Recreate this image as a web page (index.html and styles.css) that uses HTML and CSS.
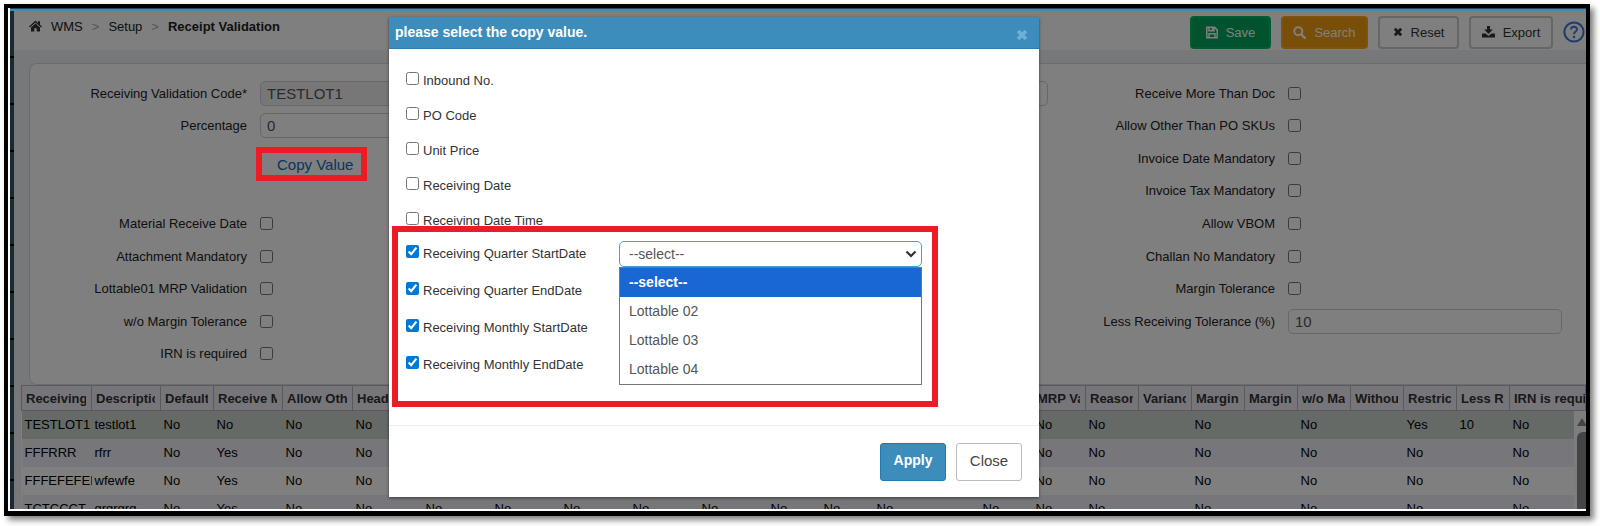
FILE: index.html
```html
<!DOCTYPE html>
<html lang="en">
<head>
    <meta charset="UTF-8">
    <meta name="viewport" content="width=device-width, initial-scale=1.0">
    <title>Receipt Validation</title>
    <link rel="stylesheet" href="styles.css">
</head>
<body>
    <div class="frame">
        <div class="topline"></div>
        <div class="app">
            <div class="sidebar"></div>
            <main class="main">
                <header class="header">
                    <nav class="breadcrumb">
                        <svg width="13" height="12" viewBox="0 0 13 12"><path d="M6.5 0.6 L9 2.9 V1.2 H11 V4.8 L13 6.6 L12.2 7.5 L6.5 2.4 L0.8 7.5 L0 6.6 Z M6.5 3.6 L11 7.6 V11.4 H7.7 V8.2 H5.3 V11.4 H2 V7.6 Z" fill="#333"/></svg>
                        <a href="#">WMS</a>
                        <span class="sep">&gt;</span>
                        <a href="#">Setup</a>
                        <span class="sep">&gt;</span>
                        <strong>Receipt Validation</strong>
                    </nav>
                    <div class="actions">
                        <button class="btn btn-save">
                            <svg width="12" height="13" viewBox="0 0 12 13"><path d="M0.8 1.3 H8.6 L11.2 3.9 V11.7 H0.8 Z M3 1.3 V4.8 H8 V1.3 M3 11.7 V7.8 H9 V11.7" fill="none" stroke="#fff" stroke-width="1.5"/><rect x="5.8" y="1.6" width="1.6" height="2.6" fill="#fff"/></svg>
                            Save
                        </button>
                        <button class="btn btn-search">
                            <svg width="13" height="13" viewBox="0 0 13 13"><circle cx="5.3" cy="5.3" r="4" fill="none" stroke="#fff" stroke-width="2"/><path d="M8.3 8.3 L11.8 11.8" stroke="#fff" stroke-width="2.4" stroke-linecap="round"/></svg>
                            Search
                        </button>
                        <button class="btn">
                            <svg width="10" height="10" viewBox="0 0 10 10"><path d="M1.8 1.8 L8.2 8.2 M8.2 1.8 L1.8 8.2" stroke="#333" stroke-width="2.8"/></svg>
                            Reset
                        </button>
                        <button class="btn btn-export">
                            <svg width="13" height="12" viewBox="0 0 13 12"><path d="M5 0 H8 V3.6 H10.8 L6.5 8 L2.2 3.6 H5 Z M0 7.4 H3.6 L6.5 10 L9.4 7.4 H13 V11.4 H0 Z" fill="#333"/></svg>
                            Export
                        </button>
                        <a href="#" class="help" aria-label="Help">
                            <svg width="22" height="22" viewBox="0 0 22 22"><circle cx="11" cy="11" r="9.6" fill="none" stroke="#3c78dc" stroke-width="2"/><path d="M8 8.6 C8 4.8 14 4.9 14 8.3 C14 10.6 11 10.6 11 13.2" fill="none" stroke="#3c78dc" stroke-width="1.9"/><circle cx="11" cy="16" r="1.3" fill="#3c78dc"/></svg>
                        </a>
                    </div>
                </header>

                <form class="panel">
                    <div class="col">
                        <div class="field"><label for="code">Receiving Validation Code*</label><input type="text" id="code" value="TESTLOT1" disabled></div>
                        <div class="field"><label for="percentage">Percentage</label><input type="text" id="percentage" value="0"></div>
                        <div class="field copy-row"><div class="copy"><a href="#">Copy Value</a><div class="callout"></div></div></div>
                        <div class="field"></div>
                        <div class="field"><label for="mrd">Material Receive Date</label><input type="checkbox" id="mrd"></div>
                        <div class="field"><label for="attach">Attachment Mandatory</label><input type="checkbox" id="attach"></div>
                        <div class="field"><label for="mrp">Lottable01 MRP Validation</label><input type="checkbox" id="mrp"></div>
                        <div class="field"><label for="womargin">w/o Margin Tolerance</label><input type="checkbox" id="womargin"></div>
                        <div class="field"><label for="irn">IRN is required</label><input type="checkbox" id="irn"></div>
                    </div>
                    <div class="col">
                        <div class="field"><label for="desc">Description</label><input type="text" id="desc" value="testlot1"></div>
                    </div>
                    <div class="col">
                        <div class="field"><label for="more">Receive More Than Doc</label><input type="checkbox" id="more"></div>
                        <div class="field"><label for="other">Allow Other Than PO SKUs</label><input type="checkbox" id="other"></div>
                        <div class="field"><label for="invdate">Invoice Date Mandatory</label><input type="checkbox" id="invdate"></div>
                        <div class="field"><label for="invtax">Invoice Tax Mandatory</label><input type="checkbox" id="invtax"></div>
                        <div class="field"><label for="vbom">Allow VBOM</label><input type="checkbox" id="vbom"></div>
                        <div class="field"><label for="challan">Challan No Mandatory</label><input type="checkbox" id="challan"></div>
                        <div class="field"><label for="margin">Margin Tolerance</label><input type="checkbox" id="margin"></div>
                        <div class="field"><label for="less">Less Receiving Tolerance (%)</label><input type="text" id="less" value="10"></div>
                    </div>
                </form>

                <div class="grid">
                    <table>
                        <colgroup>
                            <col class="wide">
                            <col class="medium">
                            <col class="narrow">
                            <col class="medium">
                            <col span="2" class="wide">
                            <col span="5" class="medium">
                            <col span="14" class="narrow">
                            <col>
                        </colgroup>
                        <thead>
                            <tr>
                                <th><div>Receiving</div></th><th><div>Description</div></th><th><div>Default</div></th><th><div>Receive More</div></th><th><div>Allow Other</div></th><th><div>Header</div></th>
                                <th></th><th></th><th></th><th></th><th></th><th></th><th></th><th></th><th></th><th></th>
                                <th><div>MRP Validation</div></th><th><div>Reason</div></th><th><div>Variance</div></th><th><div>Margin</div></th><th><div>Margin</div></th><th><div>w/o Margin</div></th><th><div>Without</div></th><th><div>Restrict</div></th><th><div>Less Receiving</div></th><th class="last"><div>IRN is required</div></th>
                            </tr>
                        </thead>
                        <tbody>
                            <tr class="selected">
                                <td>TESTLOT1</td><td>testlot1</td><td>No</td><td>No</td><td>No</td><td>No</td>
                                <td>No</td><td>No</td><td>No</td><td>No</td><td>No</td><td>No</td><td>No</td><td>No</td><td></td><td>No</td>
                                <td>No</td><td>No</td><td></td><td>No</td><td></td><td>No</td><td></td><td>Yes</td><td>10</td><td>No</td>
                            </tr>
                            <tr>
                                <td>FFFRRR</td><td>rfrr</td><td>No</td><td>Yes</td><td>No</td><td>No</td>
                                <td>No</td><td>No</td><td>No</td><td>No</td><td>No</td><td>No</td><td>No</td><td>No</td><td></td><td>No</td>
                                <td>No</td><td>No</td><td></td><td>No</td><td></td><td>No</td><td></td><td>No</td><td></td><td>No</td>
                            </tr>
                            <tr>
                                <td>FFFEFEFEF</td><td>wfewfe</td><td>No</td><td>Yes</td><td>No</td><td>No</td>
                                <td>No</td><td>No</td><td>No</td><td>No</td><td>No</td><td>No</td><td>No</td><td>No</td><td></td><td>No</td>
                                <td>No</td><td>No</td><td></td><td>No</td><td></td><td>No</td><td></td><td>No</td><td></td><td>No</td>
                            </tr>
                            <tr>
                                <td>TCTCCCT</td><td>grgrgrg</td><td>No</td><td>Yes</td><td>No</td><td>No</td>
                                <td>No</td><td>No</td><td>No</td><td>No</td><td>No</td><td>No</td><td>No</td><td>No</td><td></td><td>No</td>
                                <td>No</td><td>No</td><td></td><td>No</td><td></td><td>No</td><td></td><td>No</td><td></td><td>No</td>
                            </tr>
                        </tbody>
                    </table>
                    <div class="scrollbar"><div class="arrow"></div><div class="thumb"></div></div>
                </div>
            </main>
            <div class="backdrop"></div>

            <div class="modal" role="dialog" aria-labelledby="modalTitle">
                <div class="modal-header">
                    <span id="modalTitle">please select the copy value.</span>
                    <button class="close" aria-label="Close dialog">
                        <svg width="12" height="12" viewBox="0 0 12 12"><path d="M2 2 L10 10 M10 2 L2 10" stroke="#6fb0d8" stroke-width="3.6"/></svg>
                    </button>
                </div>
                <div class="modal-body">
                    <div class="option"><label><input type="checkbox">Inbound No.</label></div>
                    <div class="option"><label><input type="checkbox">PO Code</label></div>
                    <div class="option"><label><input type="checkbox">Unit Price</label></div>
                    <div class="option"><label><input type="checkbox">Receiving Date</label></div>
                    <div class="option"><label><input type="checkbox">Receiving Date Time</label></div>
                    <div class="checked-group">
                        <div class="option">
                            <label><input type="checkbox" checked>Receiving Quarter StartDate</label>
                            <div class="dropdown">
                                <select aria-label="Receiving Quarter StartDate value">
                                    <option>--select--</option>
                                    <option>Lottable 02</option>
                                    <option>Lottable 03</option>
                                    <option>Lottable 04</option>
                                </select>
                                <svg class="chevron" width="12" height="8" viewBox="0 0 12 8"><path d="M1.5 1.5 L6 6 L10.5 1.5" fill="none" stroke="#333" stroke-width="2.2"/></svg>
                                <ul class="menu">
                                    <li class="active">--select--</li>
                                    <li>Lottable 02</li>
                                    <li>Lottable 03</li>
                                    <li>Lottable 04</li>
                                </ul>
                            </div>
                        </div>
                        <div class="option"><label><input type="checkbox" checked>Receiving Quarter EndDate</label></div>
                        <div class="option"><label><input type="checkbox" checked>Receiving Monthly StartDate</label></div>
                        <div class="option"><label><input type="checkbox" checked>Receiving Monthly EndDate</label></div>
                        <div class="callout"></div>
                    </div>
                </div>
                <div class="modal-footer">
                    <button class="btn-apply">Apply</button>
                    <button class="btn-close">Close</button>
                </div>
            </div>
        </div>
    </div>
</body>
</html>
```

FILE: styles.css
```css
* {
    box-sizing: border-box;
}
body {
    margin: 0;
    height: 100vh;
    padding: 4px 10px 10px 4px;
    display: flex;
    background: #fff;
    font-family: "Liberation Sans", Arial, sans-serif;
    font-size: 13px;
    color: #222;
}
button, input, select {
    font-family: inherit;
}
a {
    color: inherit;
    text-decoration: none;
}
.frame {
    flex: 1;
    min-width: 0;
    display: flex;
    flex-direction: column;
    border: 4px solid #000;
    border-bottom-width: 5px;
    padding: 0 0 2px 2px;
    background: #fff;
    box-shadow: 4px 4px 6px rgba(0, 0, 0, 0.5);
}
.topline {
    height: 3px;
    border-top: 1px solid #1e465e;
    background: #3c8dbc;
}
.app {
    position: relative;
    flex: 1;
    min-height: 0;
    display: flex;
    overflow: hidden;
}
.sidebar {
    width: 4px;
    background: repeating-linear-gradient(#34556b 0 45px, #000 45px 47px);
}
.main {
    flex: 1;
    min-width: 0;
    background: #ecf0f5;
}

/* header */
.header {
    display: flex;
    justify-content: space-between;
    align-items: center;
    height: 39px;
    margin-bottom: 13px;
    padding: 3px 1px 0 15px;
    background: #fff;
}
.breadcrumb {
    display: flex;
    align-items: center;
    gap: 9px;
    margin-bottom: 12px;
}
.breadcrumb .sep {
    color: #aaa;
}
.actions {
    display: flex;
    align-items: center;
    gap: 10px;
}
.btn {
    display: flex;
    align-items: center;
    justify-content: center;
    gap: 8px;
    width: 81px;
    height: 33px;
    padding: 0;
    border: 2px solid #ccc;
    border-radius: 4px;
    background: #fff;
    font-size: 13px;
    color: #333;
}
.btn-save {
    background: #00a65a;
    border-color: #00b864;
    color: #fff;
}
.btn-search {
    width: 87px;
    background: #f39c12;
    border-color: #ffa71f;
    color: #fff;
}
.btn-export {
    width: 84px;
}
.help {
    height: 22px;
}

/* form */
.panel {
    display: grid;
    grid-template-columns: repeat(3, 1fr);
    margin-left: 15px;
    padding: 13px 14px 14px 0;
    border: 1px solid #d5dae0;
    border-right: none;
    border-radius: 8px 0 0 8px;
    background: #fff;
}
.col {
    display: grid;
    grid-template-rows: repeat(9, 1fr);
    min-height: 293px;
}
.field {
    display: grid;
    grid-template-columns: 217px 1fr;
    column-gap: 13px;
    align-items: center;
    padding-right: 10px;
}
.field label {
    text-align: right;
}
.field input[type="text"] {
    width: 100%;
    height: 25px;
    padding: 0 6px;
    border: 1px solid #ccd0da;
    border-radius: 5px;
    background: #fff;
    font-size: 15px;
    color: #555;
}
.field input[type="text"]:disabled {
    background: #eee;
}
input[type="checkbox"] {
    width: 13px;
    height: 13px;
    margin: 0;
    accent-color: #0078d7;
}
.copy {
    grid-column: 2;
    position: relative;
    padding: 13px 0 0 17px;
    font-size: 15px;
    color: #0d6ac8;
}
.callout {
    position: absolute;
    border: 6px solid #ed1c24;
    pointer-events: none;
    z-index: 20;
}
.copy .callout {
    top: 4px;
    left: -4px;
    width: 111px;
    height: 34px;
}

/* grid */
.grid {
    position: relative;
    margin-left: 7px;
    background: #fff;
}
table {
    width: 100%;
    table-layout: fixed;
    border-collapse: collapse;
}
.wide {
    width: 70px;
}
.medium {
    width: 69px;
}
.narrow {
    width: 53px;
}
th {
    height: 25px;
    padding: 0 5px 0 4px;
    border: 1px solid #b4b4b4;
    background: #ecebf2;
    text-align: left;
    color: #333;
}
th.last {
    padding-right: 0;
}
th div {
    overflow: hidden;
    white-space: nowrap;
}
td {
    height: 28px;
    padding: 0 0 0 3px;
    overflow: hidden;
    white-space: nowrap;
    color: #000;
}
tbody tr:nth-child(even) {
    background: #edecf6;
}
tbody tr.selected {
    background: #cbd4cd;
}
.scrollbar {
    position: absolute;
    top: 26px;
    right: 0;
    bottom: 0;
    width: 12px;
    padding-left: 3px;
    background: #fafafa;
}
.arrow {
    margin: 7px 0 6px;
    border: 5px solid transparent;
    border-top: none;
    border-bottom: 8px solid #888;
}
.thumb {
    height: 100%;
    border-radius: 6px 0 0 0;
    background: #888;
}

/* modal */
.backdrop {
    position: absolute;
    inset: 0;
    background: rgba(0, 0, 0, 0.5);
    z-index: 10;
}
.modal {
    position: absolute;
    top: 6px;
    left: 379px;
    width: 650px;
    background: #fff;
    color: #333;
    box-shadow: 0 1px 3px rgba(0, 0, 0, 0.5);
    z-index: 15;
}
.modal-header {
    display: flex;
    justify-content: space-between;
    height: 32px;
    padding: 0 11px 0 6px;
    border-bottom: 1px solid #2a7fb0;
    background: #3c8dbc;
    font-size: 14px;
    font-weight: bold;
    line-height: 31px;
    color: #fff;
}
.close {
    padding: 7px 0 0;
    border: none;
    background: none;
}
.modal-body {
    padding: 14px 0 42px;
}
.option {
    display: flex;
    align-items: center;
    height: 35px;
    padding-left: 17px;
}
.option label {
    display: flex;
    width: 213px;
    line-height: 18px;
}
.option label input {
    margin-right: 4px;
}
.checked-group {
    position: relative;
    margin-top: -3px;
}
.checked-group .option {
    height: 37px;
}
.checked-group .callout {
    top: -9px;
    left: 3px;
    width: 546px;
    height: 181px;
}
.dropdown {
    position: relative;
    width: 303px;
    font-size: 14px;
}
.dropdown select {
    display: block;
    appearance: none;
    width: 100%;
    height: 26px;
    padding: 0 9px;
    border: 1px solid #4a9fd0;
    border-radius: 5px;
    background: #fff;
    font-size: 14px;
    color: #555;
}
.chevron {
    position: absolute;
    top: 9px;
    right: 5px;
}
.menu {
    position: absolute;
    top: 100%;
    left: 0;
    right: 0;
    margin: 0;
    padding: 0;
    border: 1px solid #767676;
    background: #fff;
    list-style: none;
    line-height: 29px;
    color: #555;
}
.menu li {
    padding: 0 9px;
}
.menu .active {
    background: #1967d2;
    font-weight: bold;
    color: #fff;
}
.modal-footer {
    display: flex;
    justify-content: flex-end;
    gap: 10px;
    padding: 17px 17px 16px;
    border-top: 1px solid #eee;
}
.modal-footer button {
    width: 66px;
    height: 38px;
    padding: 0 0 4px;
    border: 1px solid #1f7bb0;
    border-radius: 3px;
    background: #3c8dbc;
    font-size: 14px;
    font-weight: bold;
    color: #fff;
}
.modal-footer .btn-close {
    border: 1px solid #bbb;
    background: #fff;
    font-size: 15px;
    font-weight: normal;
    color: #444;
}
```
